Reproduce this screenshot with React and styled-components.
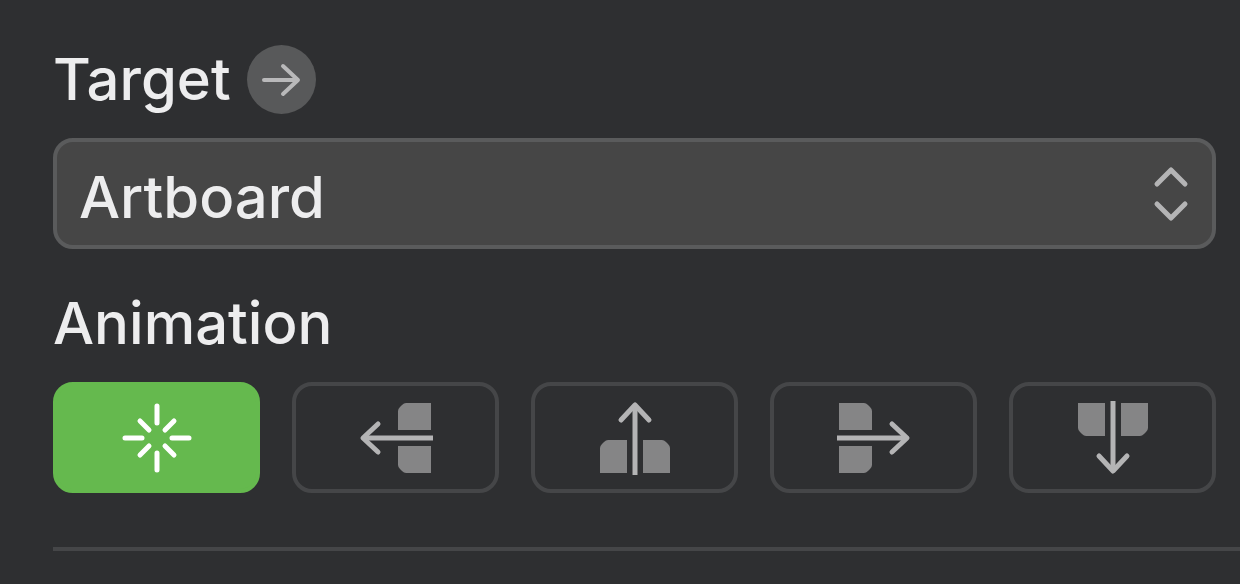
import React, { useState } from 'react';
import styled, { createGlobalStyle } from 'styled-components';

const GlobalStyle = createGlobalStyle`
* {
  box-sizing: border-box;
}
body {
  margin: 0;
  min-height: 100vh;
  background-color: #2e2f31;
  font-family: Inter, Roboto, sans-serif;
  color: #ededee;
}
`
const Panel = styled.main`
  display: flex;
  flex-direction: column;
  padding-top: 45px;
`
const Section = styled.section`
  display: flex;
  flex-direction: column;
  gap: 24px;
  padding: 0 24px 0 53px;
  margin-bottom: 40px;
`
const Heading = styled.div`
  display: flex;
  align-items: center;
  gap: 16px;
`
const Label = styled.label`
  font-size: 58px;
  font-weight: 500;
  line-height: 69px;
`
const Title = styled.h2`
  margin: 0;
  font-size: 58px;
  font-weight: 500;
  line-height: 69px;
`
const JumpButton = styled.button`
  width: 69px;
  height: 69px;
  display: flex;
  align-items: center;
  justify-content: center;
  padding: 0;
  border: none;
  border-radius: 50%;
  background-color: #58595a;
  color: #b9b9ba;
  cursor: pointer;
`
const SelectWrapper = styled.div`
  position: relative;
  display: flex;
`
const Select = styled.select`
  appearance: none;
  width: 100%;
  height: 111px;
  padding: 6px 80px 0 22px;
  border: 4px solid #5a5b5c;
  border-radius: 20px;
  background-color: #464646;
  color: #ededee;
  font-family: inherit;
  font-size: 58px;
  font-weight: 500;
  cursor: pointer;
`
const SelectArrows = styled.svg`
  position: absolute;
  top: 24px;
  right: 25px;
  color: #b4b4b5;
  pointer-events: none;
`
const Options = styled.div`
  display: grid;
  grid-template-columns: repeat(5, 1fr);
  gap: 32px;
`
const Option = styled.button`
  height: 111px;
  display: flex;
  align-items: center;
  justify-content: center;
  padding: 0;
  border: 4px solid ${props => props.$active ? '#65b94e' : '#454648'};
  border-radius: 20px;
  background-color: ${props => props.$active ? '#65b94e' : 'transparent'};
  color: ${props => props.$active ? '#fff' : '#b4b4b5'};
  cursor: pointer;
`
const Divider = styled.hr`
  width: auto;
  height: 4px;
  margin: 14px 0 0 53px;
  border: none;
  background-color: #454648;
`

const BurstIcon = () => (
    <svg width="80" height="80" viewBox="-40 -40 80 80" fill="none" stroke="currentColor" strokeWidth="5" strokeLinecap="round" aria-hidden="true">
        <path d="M0 -32V-15M0 15V32M-32 0H-15M15 0H32" />
        <path d="M-17 -17L-8 -8M17 -17L8 -8M-17 17L-8 8M17 17L8 8" />
    </svg>
)

// drawn pointing left, the other directions are turned from it
const SlideIcon = ({ angle }) => (
    <svg width="80" height="80" viewBox="-40 -40 80 80" fill="none" aria-hidden="true">
        <g transform={`rotate(${angle})`}>
            <path d="M35 -35V-8H2V-27Q2 -29 4 -31L6 -33Q8 -35 10 -35Z" fill="#858586" />
            <path d="M35 35V8H2V27Q2 29 4 31L6 33Q8 35 10 35Z" fill="#858586" />
            <path d="M37 0H-32" stroke="currentColor" strokeWidth="5" />
            <path d="M-18 -14L-33 0L-18 14" stroke="currentColor" strokeWidth="5" strokeLinecap="round" strokeLinejoin="round" />
        </g>
    </svg>
)

const directions = [
    { name: 'Slide left', angle: 0 },
    { name: 'Slide up', angle: 90 },
    { name: 'Slide right', angle: 180 },
    { name: 'Slide down', angle: 270 },
]

const App = () => {
    const [active, setActive] = useState('None');

    return (
        <>
            <GlobalStyle />
            <Panel>
                <Section>
                    <Heading>
                        <Label htmlFor="target">Target</Label>
                        <JumpButton aria-label="Go to target">
                            <svg width="44" height="44" viewBox="-22 -22 44 44" fill="none" stroke="currentColor" strokeWidth="4" strokeLinecap="round" strokeLinejoin="round" aria-hidden="true">
                                <path d="M-17 0H16M2 -14L17 0L2 14" />
                            </svg>
                        </JumpButton>
                    </Heading>
                    <SelectWrapper>
                        <Select id="target" defaultValue="Artboard">
                            <option>Artboard</option>
                        </Select>
                        <SelectArrows width="40" height="64" viewBox="-20 -32 40 64" fill="none" stroke="currentColor" strokeWidth="5" strokeLinecap="round" strokeLinejoin="round" aria-hidden="true">
                            <path d="M-14 -10L0 -24L14 -10M-14 10L0 24L14 10" />
                        </SelectArrows>
                    </SelectWrapper>
                </Section>
                <Section>
                    <Title>Animation</Title>
                    <Options>
                        <Option aria-label="None" $active={active === 'None'} onClick={() => setActive('None')}>
                            <BurstIcon />
                        </Option>
                        {directions.map(({ name, angle }) => (
                            <Option key={name} aria-label={name} $active={active === name} onClick={() => setActive(name)}>
                                <SlideIcon angle={angle} />
                            </Option>
                        ))}
                    </Options>
                </Section>
                <Divider />
            </Panel>
        </>
    );
};

export default App;
